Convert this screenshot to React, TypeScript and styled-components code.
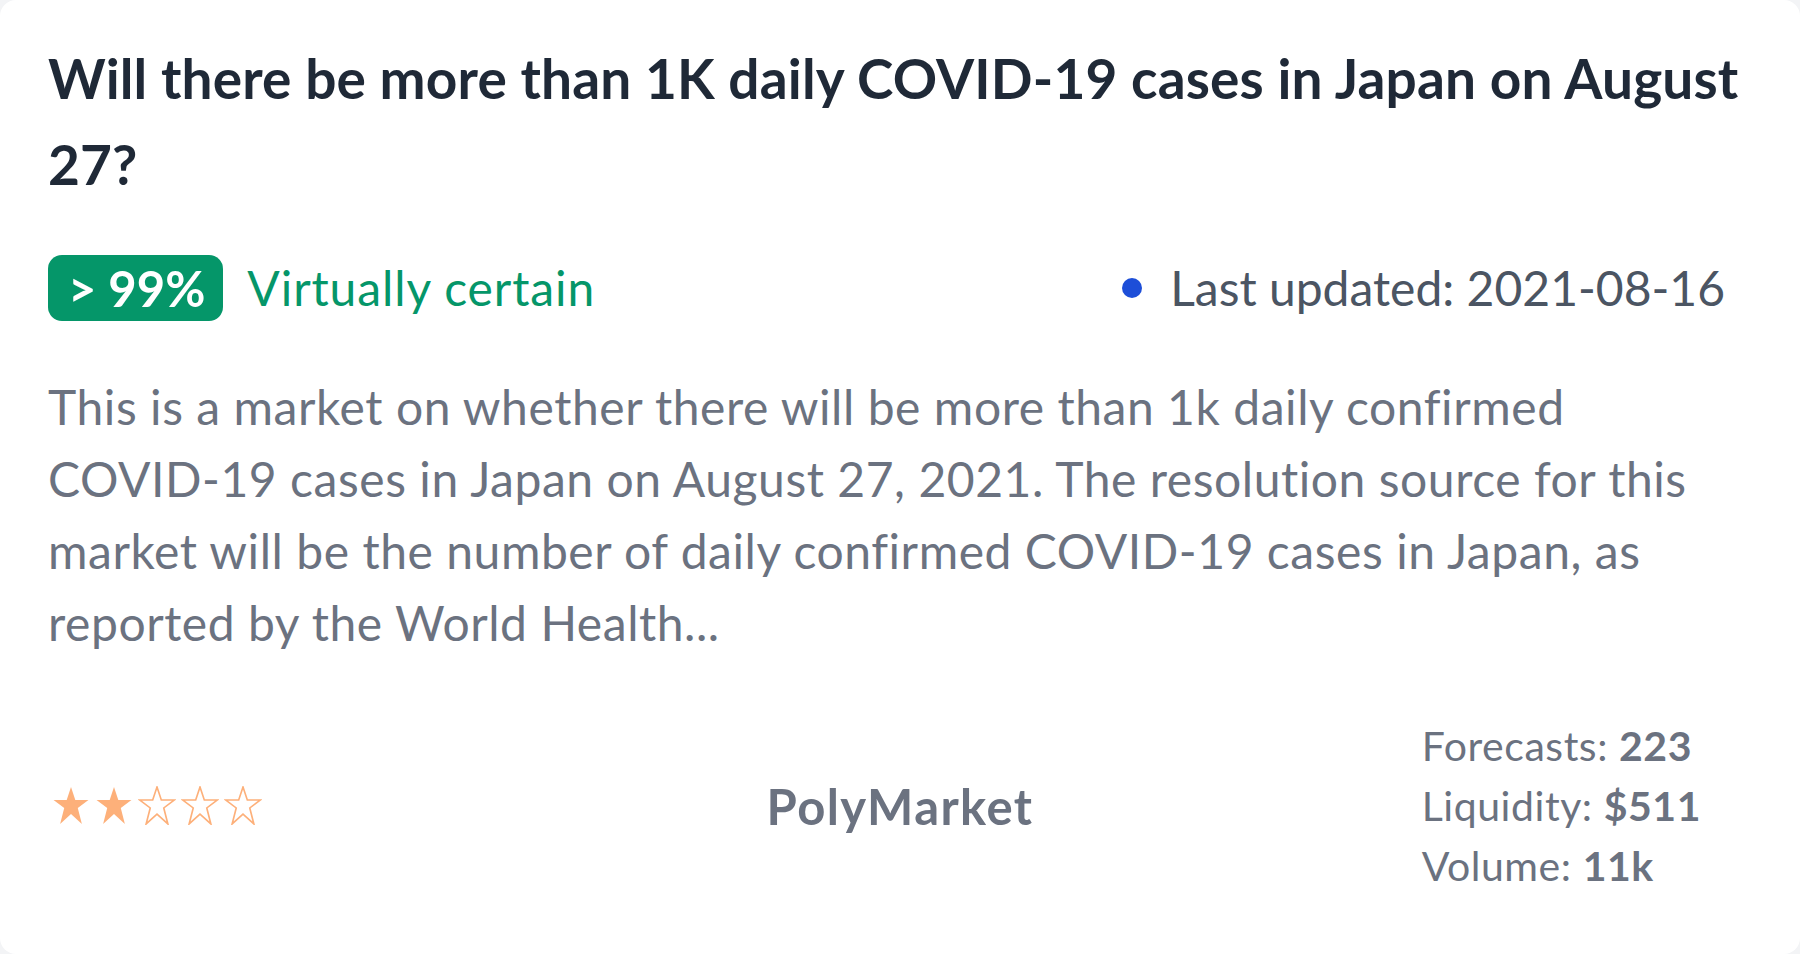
import React from "react";
import styled, { createGlobalStyle } from "styled-components";

const GlobalStyle = createGlobalStyle`
  html, body {
    margin: 0;
    padding: 0;
    background: #f3f4f6;
  }
  body {
    font-family: Lato, "Noto Sans", sans-serif;
  }
  * { box-sizing: border-box; }
`;

const Card = styled.div`
  width: 1800px;
  height: 954px;
  background: #ffffff;
  border-radius: 16px;
  padding: 35px 48px 0;
  display: flex;
  flex-direction: column;
`;

const Title = styled.h1`
  margin: 0;
  font-size: 55px;
  line-height: 86.4px;
  font-weight: 700;
  letter-spacing: 0.15px;
  color: #1f2937;
`;

const MetaRow = styled.div`
  margin-top: 47px;
  display: flex;
  align-items: center;
  justify-content: space-between;
  height: 66px;
`;

const Group = styled.div`
  display: flex;
  align-items: center;
  gap: 24px;
`;

const Badge = styled.span`
  display: inline-flex;
  align-items: center;
  height: 66px;
  padding: 0 18px 0 20px;
  background: #059669;
  color: #ffffff;
  border-radius: 14px;
  font-size: 49px;
  font-weight: 700;
`;

const Certainty = styled.span`
  color: #059669;
  font-size: 48px;
  letter-spacing: 0.9px;
`;

const Updated = styled.div`
  display: flex;
  align-items: center;
  gap: 28px;
  margin-right: 27px;
  color: #4b5563;
  font-size: 48px;
`;

const Dot = styled.span`
  width: 20px;
  height: 20px;
  border-radius: 50%;
  background: #1d4ed8;
`;

const Description = styled.p`
  margin: 50px 0 0;
  max-width: 1670px;
  font-size: 48px;
  line-height: 72px;
  letter-spacing: 0.55px;
  color: #6b7280;
`;

const Footer = styled.div`
  margin-top: 57px;
  display: grid;
  grid-template-columns: 1fr auto 1fr;
  align-items: center;
`;

const Stars = styled.div`
  display: flex;
  gap: 5px;
  padding-left: 4px;
`;

const Platform = styled.div`
  font-size: 49px;
  font-weight: 700;
  letter-spacing: 1.4px;
  color: #6b7280;
`;

const Stats = styled.div`
  justify-self: end;
  margin-right: 51px;
  display: flex;
  flex-direction: column;
  font-size: 41px;
  line-height: 60px;
  letter-spacing: 0.55px;
  color: #6b7280;
`;

const Value = styled.b`
  font-weight: 700;
`;

const Star: React.FC<{ filled: boolean }> = ({ filled }) => (
  <svg width="38" height="39" viewBox="0 0 36 38">
    <polygon
      points="18,1 22.2,13.6 35,13.6 24.6,21.4 28.6,37 18,27.4 7.4,37 11.4,21.4 1,13.6 13.8,13.6"
      fill={filled ? "#fdb07a" : "none"}
      stroke="#fdb07a"
      strokeWidth={filled ? 0 : 1.6}
      strokeLinejoin="miter"
    />
  </svg>
);

export default function App() {
  const rating = 2;
  return (
    <>
      <GlobalStyle />
      <Card>
        <Title>Will there be more than 1K daily COVID-19 cases in Japan on August 27?</Title>
        <MetaRow>
          <Group>
            <Badge>&gt; 99%</Badge>
            <Certainty>Virtually certain</Certainty>
          </Group>
          <Updated>
            <Dot />
            <span>Last updated: 2021-08-16</span>
          </Updated>
        </MetaRow>
        <Description>
          This is a market on whether there will be more than 1k daily confirmed COVID-19 cases in Japan on
          August 27, 2021. The resolution source for this market will be the number of daily confirmed
          COVID-19 cases in Japan, as reported by the World Health...
        </Description>
        <Footer>
          <Stars>
            {[0, 1, 2, 3, 4].map((i) => (
              <Star key={i} filled={i < rating} />
            ))}
          </Stars>
          <Platform>PolyMarket</Platform>
          <Stats>
            <span>
              Forecasts: <Value>223</Value>
            </span>
            <span>
              Liquidity: <Value>$511</Value>
            </span>
            <span>
              Volume: <Value>11k</Value>
            </span>
          </Stats>
        </Footer>
      </Card>
    </>
  );
}
